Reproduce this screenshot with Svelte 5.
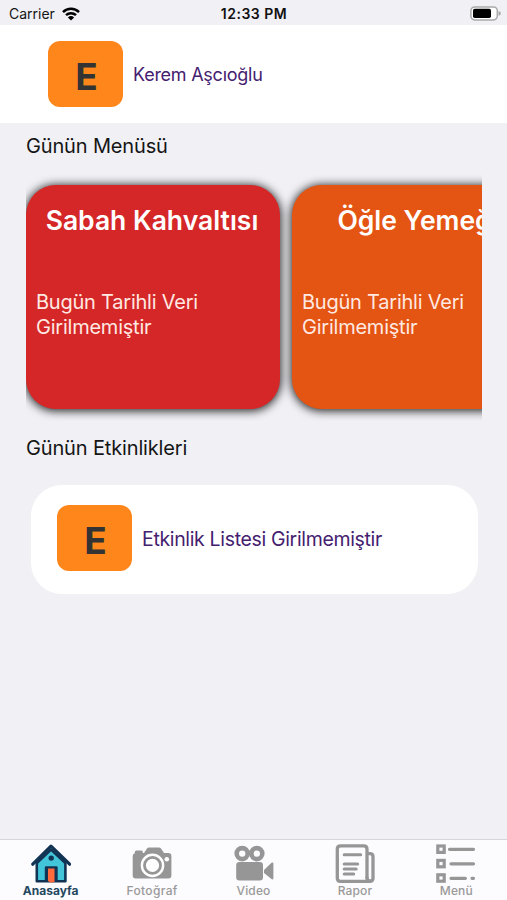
<script>
  const meals = [
    { title: 'Sabah Kahvaltısı', color: '#d52727' },
    { title: 'Öğle Yemeği', color: '#e45412' }
  ];
  const tabs = [
    { id: 'home', label: 'Anasayfa' },
    { id: 'photo', label: 'Fotoğraf' },
    { id: 'video', label: 'Video' },
    { id: 'report', label: 'Rapor' },
    { id: 'menu', label: 'Menü' }
  ];
</script>

<div class="screen">
  <div class="status">
    <div class="carrier">
      <span>Carrier</span>
      <svg width="18" height="14" viewBox="0 0 18 14">
        <g fill="none" stroke="#000" stroke-width="2.5">
          <path d="M1 5.1a11.5 11.5 0 0 1 16 0" />
          <path d="M4 8.2a7.2 7.2 0 0 1 10 0" />
        </g>
        <path d="M9 13.6 5.9 10.5a4.5 4.5 0 0 1 6.2 0Z" />
      </svg>
    </div>
    <b class="clock">12:33 PM</b>
    <svg class="battery" width="31" height="15" viewBox="0 0 31 15">
      <rect x=".9" y=".9" width="26.4" height="13" rx="3.8" fill="#fff" stroke="#a9a9ab" stroke-width="1.5" />
      <rect x="3" y="2.8" width="18" height="9.2" rx="1.8" />
      <path d="M28.5 5q2.4.7 2.4 2.4t-2.4 2.4Z" fill="#a9a9ab" />
    </svg>
  </div>

  <header>
    <div class="avatar">E</div>
    <span class="name">Kerem Aşcıoğlu</span>
  </header>

  <h2 class="menu-title">Günün Menüsü</h2>
  <div class="carousel">
    {#each meals as meal}
      <article class="meal" style:background={meal.color}>
        <h3>{meal.title}</h3>
        <p>Bugün Tarihli Veri<br />Girilmemiştir</p>
      </article>
    {/each}
  </div>

  <h2 class="event-title">Günün Etkinlikleri</h2>
  <section class="event">
    <div class="avatar">E</div>
    <span class="name listing">Etkinlik Listesi Girilmemiştir</span>
  </section>

  <nav>
    {#each tabs as tab}
      <div class="tab {tab.id}">
        <svg width="40" height="40" viewBox="0 0 40 40">
          {#if tab.id === 'home'}
            <path d="M5.8 19v18.3h28.6V19L20 5.5Z" fill="#42c5d9" stroke="#123454" stroke-width="2.6" stroke-linejoin="round" />
            <path d="M1.8 20.2 20 2.2l18.6 18" fill="none" stroke="#123454" stroke-width="3.2" stroke-linecap="round" stroke-linejoin="round" />
            <path d="M15 37.2V23.5h10.5v13.7" fill="#123454" stroke="#123454" stroke-width="2.4" stroke-linejoin="round" />
            <path d="M17 24.5h6.5V38l-3.6.8-2.9-1.8Z" fill="#ff6b3d" />
            <circle cx="20.2" cy="14.1" r="2.7" fill="#123454" />
          {:else if tab.id === 'photo'}
            <path d="M2.8 8.3q0-1.8 1.5-1.8h5q1.5 0 1.5 1.5v1h1.2l3-4.4q.7-1 2-1h10q1.3 0 2 1L32 9h4.3q3.1 0 3.1 3v19.6q0 3-3.1 3H3.8q-3.1 0-3.1-3V12q0-2.2 2.1-2.8Z" fill="#969696" />
            <circle cx="20.5" cy="21.4" r="11.8" fill="#fff" />
            <circle cx="20.5" cy="21.4" r="9.4" fill="#969696" />
            <circle cx="20.5" cy="21.4" r="6.6" fill="#fff" />
            <circle cx="34.8" cy="15.3" r="2.3" fill="#fff" />
          {:else if tab.id === 'video'}
            <g fill="none" stroke="#969696" stroke-width="4.6">
              <circle cx="8.2" cy="9.6" r="5.5" />
              <circle cx="22.8" cy="9.6" r="5.5" />
            </g>
            <rect x="2.2" y="18" width="26.8" height="18.4" rx="3.2" fill="#969696" />
            <path d="M30 26 37.5 18.8q1.9-1.1 1.9.8v14.7q0 1.9-1.9.8L30 29Z" fill="#969696" />
          {:else if tab.id === 'report'}
            <g fill="none" stroke="#969696" stroke-width="3.3" stroke-linecap="round" stroke-linejoin="round">
              <path d="M32 34V5q0-3.2-3.2-3.2H5.5Q2.3 1.8 2.3 5v29.2q0 3.1 3.2 3.1h29.3q3.2 0 3.2-3.1V12.7q0-3-3-3h-3" />
              <path d="M32 33.5q0 3.5 3 3.5" />
              <path d="M9.2 10.8h16.5M9.2 20h13.5M9.2 25h12M9.2 30h9.5" stroke-width="3" />
            </g>
          {:else}
            <g fill="none" stroke="#969696" stroke-width="3.2">
              <rect x="1.8" y="2" width="6.4" height="6.4" />
              <rect x="1.8" y="16.4" width="6.4" height="6.4" />
              <rect x="1.8" y="30.8" width="6.4" height="6.4" />
              <path d="M13.5 5.3h24M15 19.8h22.5M15 34.3h14.4M36 34.3h1.5" stroke-linecap="round" />
            </g>
          {/if}
        </svg>
        <span>{tab.label}</span>
      </div>
    {/each}
  </nav>
</div>

<style>
  :global(body) { margin: 0; }
  .screen {
    width: 507px; height: 900px; box-sizing: border-box; overflow: hidden;
    display: flex; flex-direction: column;
    background: #f0f0f5; color: #151515;
    font-family: Inter, "Liberation Sans", sans-serif;
  }
  h2, h3, p { margin: 0; font-weight: 400; }
  .status {
    height: 25px; flex: none; box-sizing: border-box; padding: 0 6px 0 9px;
    display: grid; grid-template-columns: 1fr auto 1fr; align-items: center;
    font-size: 14px; line-height: 25px;
  }
  .carrier { display: flex; align-items: center; gap: 7px; height: 25px; padding-top: 1px; }
  .clock { font-size: 14px; font-weight: 600; letter-spacing: .5px; margin-right: 2px; padding-top: 1px; color: #111; }
  .battery { justify-self: end; margin-top: 1px; }
  header {
    height: 98px; flex: none; box-sizing: border-box; padding: 16px 48px 0;
    display: flex; align-items: flex-start; background: #fff;
  }
  .avatar {
    width: 75px; height: 66px; flex: none; border-radius: 12px;
    display: flex; align-items: center; justify-content: center;
    box-sizing: border-box; padding-top: 4px; padding-left: 2px;
    background: #ff861b; color: #333; font-size: 37px; line-height: 1; font-weight: 700;
  }
  .name { margin-left: 10px; line-height: 68px; font-size: 18px; letter-spacing: -.25px; color: #44206f; white-space: nowrap; }
  .listing { font-size: 19.5px; letter-spacing: -.34px; }
  h2 { flex: none; margin-left: 26px; font-size: 20px; line-height: 26px; letter-spacing: -.15px; }
  .menu-title { margin-top: 10px; }
  .carousel {
    flex: none; margin: 14px 25px 0 26px; height: 248px; padding: 12px 0 0; box-sizing: border-box;
    display: flex; gap: 12px; overflow: hidden;
  }
  .meal {
    width: 254px; height: 224px; flex: none; box-sizing: border-box;
    border-radius: 30px; padding: 17px 10px 0; color: #fff;
    box-shadow: 0 1px 10px 1px rgba(0, 0, 0, .85);
  }
  h3 { margin-left: -2px; font-size: 26.5px; line-height: 36px; font-weight: 600; text-align: center; white-space: nowrap; }
  p { margin-top: 52px; font-size: 20px; line-height: 24.5px; letter-spacing: -.23px; color: #ffe9e2; }
  .event-title { margin-top: 14px; }
  .event {
    flex: none; height: 109px; margin: 24px 29px 0 31px; box-sizing: border-box;
    padding: 20px 26px 0; display: flex; border-radius: 31px; background: #fff;
  }
  nav {
    margin-top: auto; flex: none; height: 61px; box-sizing: border-box; border-top: 1px solid #d7d7db;
    display: flex; background: #fcfbfe;
  }
  .tab {
    flex: 1; display: flex; flex-direction: column; align-items: center; padding-top: 4px;
    color: #999; font-size: 12px; line-height: 14px; font-weight: 500; letter-spacing: .15px;
  }
  .tab svg { flex: none; }
  .tab.home { color: #24485f; font-weight: 700; letter-spacing: 0; }
  .tab.photo { letter-spacing: .35px; }
</style>
